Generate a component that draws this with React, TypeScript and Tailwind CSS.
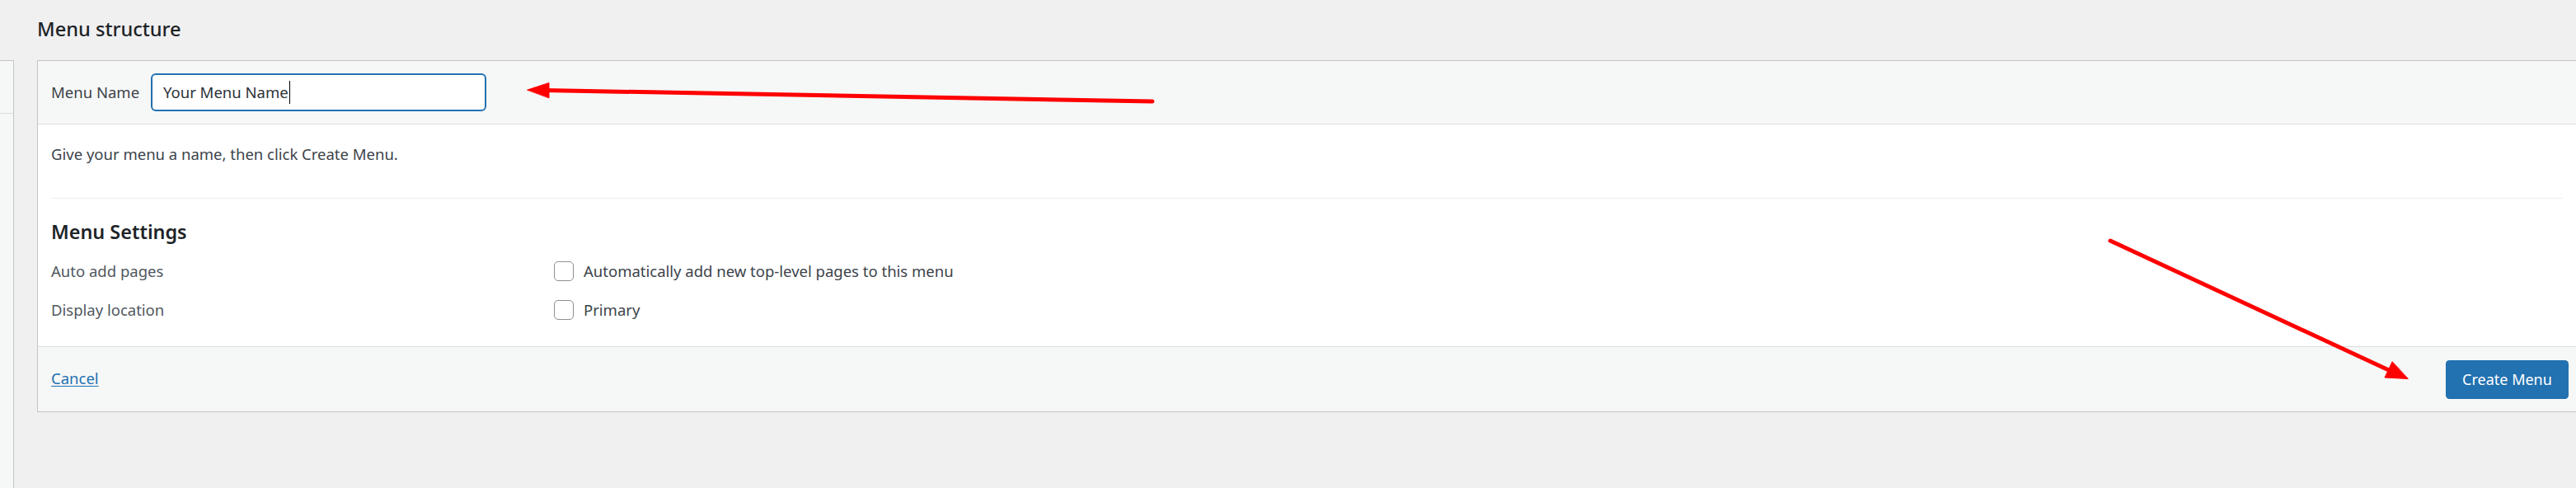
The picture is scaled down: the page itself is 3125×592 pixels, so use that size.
const font = "font-['Segoe_UI','Noto_Sans',sans-serif]";

function Arrows() {
  return (
    <svg
      className="pointer-events-none absolute inset-0"
      width="3125"
      height="592"
      viewBox="0 0 3125 592"
      aria-hidden
    >
      <g stroke="#ff0000" strokeWidth="5" strokeLinecap="round" fill="#ff0000">
        <line x1="1398" y1="123" x2="660" y2="109.5" />
        <polygon points="640,109 666,100.5 666,118.5" strokeWidth="1" />
        <line x1="2560" y1="292" x2="2900" y2="450" />
        <polygon points="2921,459.5 2893,458 2902,439" strokeWidth="1" />
      </g>
    </svg>
  );
}

function Checkbox() {
  return (
    <span className="h-6 w-6 shrink-0 rounded-[5px] border border-[#8c8f94] bg-white" />
  );
}

export default function App() {
  return (
    <div className={`relative h-[592px] w-[3125px] overflow-hidden bg-[#f0f0f1] ${font}`}>
      <h2 className="mt-[20px] mb-[23px] pl-[45px] text-[23.6px] leading-[30px] font-medium text-[#1d2327]">
        Menu structure
      </h2>

      <div className="flex items-start gap-[28px]">
        {/* left column edge */}
        <div className="h-[519px] w-[17px] shrink-0 border-t border-r border-[#c3c4c7] bg-[#f6f7f7]">
          <div className="h-[64px] border-b border-[#dcdcde]" />
        </div>

        {/* menu edit panel */}
        <div className="flex-1 border-t border-b border-l border-[#c3c4c7] bg-white text-[18.5px] text-[#3c434a]">
          <div className="flex h-[77px] items-center border-b border-[#dcdcde] bg-[#f6f7f7] pl-4">
            <label className="w-[121px] shrink-0">Menu Name</label>
            <div className="flex h-[46px] w-[407px] items-center rounded-[6px] border-2 border-[#2271b1] bg-white pl-[13px] text-[#2c3338]">
              <span>Your Menu Name</span>
              <span className="ml-px h-[28px] w-px bg-black" />
            </div>
          </div>

          <div className="px-4 pt-[21px] pb-[21px]">
            <p className="leading-[30px]">Give your menu a name, then click Create Menu.</p>
            <div className="mt-[38px] h-px bg-[#f0f0f1]" />
            <h3 className="mt-[25px] text-[23.4px] leading-[30px] font-semibold text-[#1d2327]">
              Menu Settings
            </h3>
            <div className="mt-[9px] flex h-[47px] items-center">
              <span className="w-[610px] shrink-0 text-[#50575e]">Auto add pages</span>
              <Checkbox />
              <span className="ml-3">Automatically add new top-level pages to this menu</span>
            </div>
            <div className="flex h-[47px] items-center">
              <span className="w-[610px] shrink-0 text-[#50575e]">Display location</span>
              <Checkbox />
              <span className="ml-3">Primary</span>
            </div>
          </div>

          <div className="flex h-[79px] items-center justify-between border-t border-[#dcdcde] bg-[#f6f7f7] pr-[9px] pl-4">
            <a href="#" className="-mt-[2px] text-[#2271b1] underline underline-offset-2">
              Cancel
            </a>
            <button className="flex h-[47px] w-[149px] items-center justify-center rounded-[4.5px] bg-[#2271b1] text-[18px] text-white">
              Create Menu
            </button>
          </div>
        </div>
      </div>

      <Arrows />
    </div>
  );
}
